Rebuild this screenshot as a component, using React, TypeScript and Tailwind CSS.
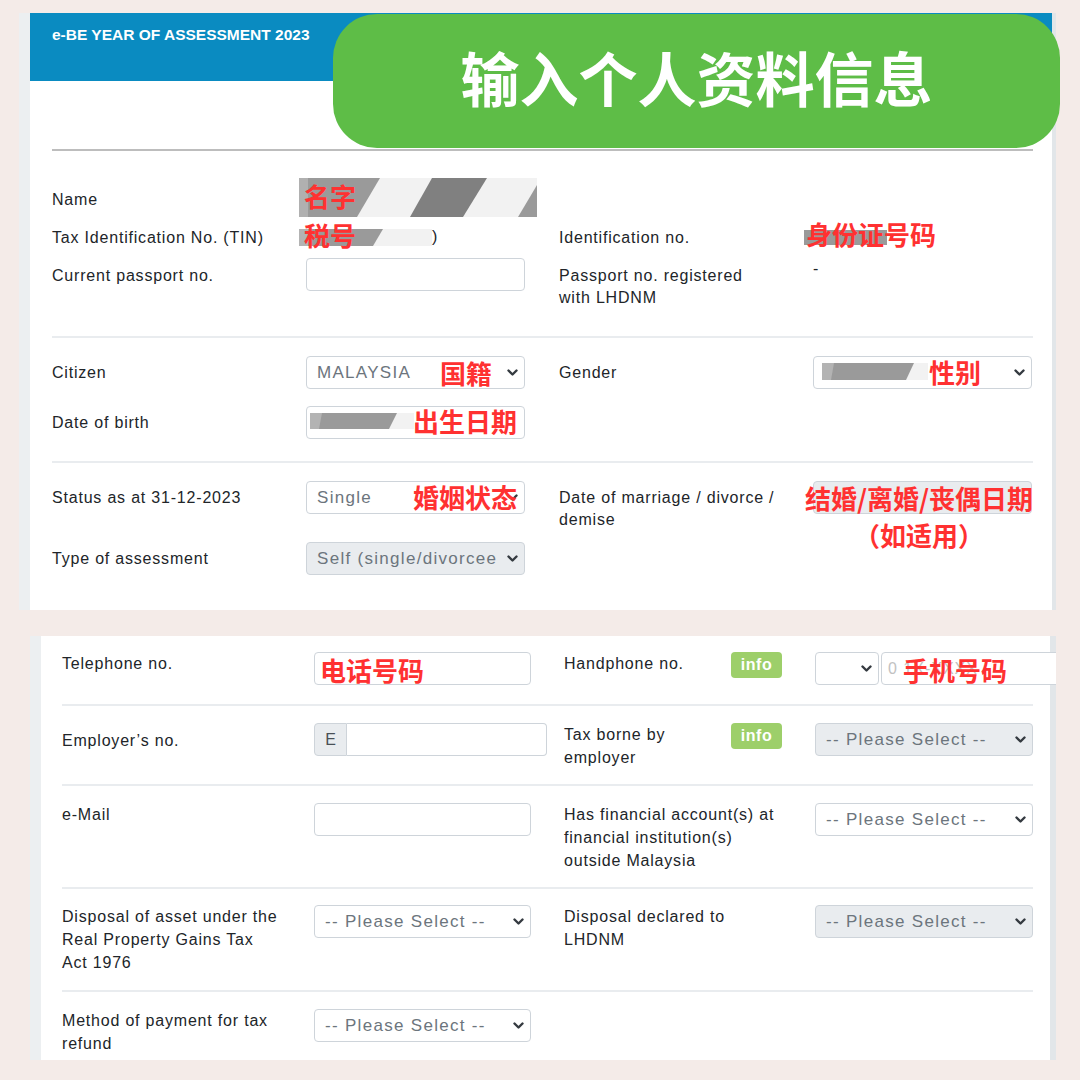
import React from "react";

const LABEL = "text-[16px] leading-[22px] tracking-[0.8px] text-[#212529]";
const LABEL2 = "text-[16px] leading-[23px] tracking-[0.8px] text-[#212529]";
const RED =
  "absolute whitespace-nowrap font-['Noto_Sans_CJK_SC',sans-serif] text-[26px] font-bold leading-[26px] text-[#ff3131]";
const COLS1 = "grid grid-cols-[254px_219px_34px_254px_219px]";
const COLS2 = "grid grid-cols-[252px_217px_33px_251px_218px]";

function Chevron() {
  return (
    <svg width="11" height="7" viewBox="0 0 11 7" className="shrink-0">
      <path
        d="M1.5 1.5 5.5 5.5 9.5 1.5"
        fill="none"
        stroke="#343a40"
        strokeWidth="2.4"
        strokeLinecap="round"
        strokeLinejoin="round"
      />
    </svg>
  );
}

function Select({
  text,
  disabled = false,
  className = "",
  children,
}: {
  text: string;
  disabled?: boolean;
  className?: string;
  children?: React.ReactNode;
}) {
  return (
    <div
      className={`relative flex h-[33px] items-center rounded-[4px] border border-[#ced4da] pl-[10px] pr-[6px] ${
        disabled ? "bg-[#e9ecef]" : "bg-white"
      } ${className}`}
    >
      <span className="min-w-0 flex-1 overflow-hidden whitespace-nowrap text-[17px] tracking-[1.3px] text-[#6c757d]">
        {text}
      </span>
      <Chevron />
      {children}
    </div>
  );
}

function Input({
  className = "",
  disabled = false,
  children,
}: {
  className?: string;
  disabled?: boolean;
  children?: React.ReactNode;
}) {
  return (
    <div
      className={`relative h-[33px] rounded-[4px] border border-[#ced4da] ${
        disabled ? "bg-[#e9ecef]" : "bg-white"
      } ${className}`}
    >
      {children}
    </div>
  );
}

function Badge() {
  return (
    <span className="flex h-[26px] w-[51px] shrink-0 items-center justify-center rounded-[4px] bg-[#9dcf6a] text-[16px] font-bold tracking-[0.5px] text-white">
      info
    </span>
  );
}

function Divider() {
  return <div className="h-[2px] bg-[#e9ecef]" />;
}

// grey diagonal redaction blocks over personal data
function NameBlur() {
  return (
    <svg width="238" height="39" viewBox="0 0 238 39" className="-ml-[7px] block">
      <rect width="238" height="39" fill="#f2f2f2" />
      <polygon points="0,0 81,0 58,39 0,39" fill="#9a9a9a" />
      <rect width="9" height="39" fill="#b0b0b0" />
      <polygon points="133,0 188,0 164,39 111,39" fill="#808080" />
      <polygon points="219,39 238,39 238,7" fill="#9a9a9a" />
    </svg>
  );
}

function ShortBlur({ w, h, g1, g2 }: { w: number; h: number; g1: number; g2: number }) {
  return (
    <svg width={w} height={h} viewBox={`0 0 ${w} ${h}`} className="block">
      <rect width={w} height={h} fill="#f2f2f2" />
      <polygon points={`0,0 ${g1},0 ${g2},${h} 0,${h}`} fill="#9a9a9a" />
      <polygon points={`0,0 12,0 9,${h} 0,${h}`} fill="#b3b3b3" />
    </svg>
  );
}

export default function App() {
  return (
    <div className="relative h-[1080px] w-[1080px] overflow-hidden bg-[#f4ebe8] pt-[13px] font-['Liberation_Sans',Arial,sans-serif]">
      {/* first screenshot panel */}
      <div className="ml-[19px] flex h-[597px] w-[1037px]">
        <div className="w-[11px] bg-[#eceff1]" />
        <div className="flex w-[1022px] flex-col bg-white">
          <div className="h-[68px] bg-[#0a8bc1] pl-[22px] pt-[12px] text-[15.5px] font-bold leading-[20px] text-white">
            e-BE YEAR OF ASSESSMENT 2023
          </div>
          <div className="pl-[22px] pr-[19px]">
            <div className="mt-[68px] h-[2px] bg-[#bdbdbd]" />

            <div className="h-[185px] pt-[27px]">
              <div className={`${COLS1} h-[39px]`}>
                <div className={`${LABEL} flex items-center pt-[5px]`}>Name</div>
                <div className="relative col-span-2">
                  <NameBlur />
                  <span className={`${RED} left-[-2px] top-[5px]`}>名字</span>
                </div>
              </div>

              <div className={`${COLS1} h-[40px]`}>
                <div className={`${LABEL} flex items-center pt-[2px]`}>Tax Identification No. (TIN)</div>
                <div className="relative -ml-[7px] flex items-center">
                  <ShortBlur w={133} h={17} g1={84} g2={74} />
                  <span className={LABEL}>)</span>
                  <span className={`${RED} left-[5px] top-[5px]`}>税号</span>
                </div>
                <div />
                <div className={`${LABEL} flex items-center pt-[2px]`}>Identification no.</div>
                <div className="relative flex items-center">
                  <div className="-ml-[9px] h-[15px] w-[83px] bg-[#9a9a9a]" />
                  <span className={`${RED} left-[-7px] top-[4px]`}>身份证号码</span>
                </div>
              </div>

              <div className={`${COLS1} mt-[1px]`}>
                <div className={`${LABEL} pt-[7px]`}>Current passport no.</div>
                <Input />
                <div />
                <div className={`${LABEL} pt-[7px]`}>
                  Passport no. registered
                  <br />
                  with LHDNM
                </div>
                <div className={LABEL}>-</div>
              </div>
            </div>
            <Divider />

            <div className="h-[123px] pt-[18px]">
              <div className={`${COLS1} h-[33px]`}>
                <div className={`${LABEL} pt-[6px]`}>Citizen</div>
                <Select text="MALAYSIA">
                  <span className={`${RED} left-[133px] top-[3px]`}>国籍</span>
                </Select>
                <div />
                <div className={`${LABEL} pt-[6px]`}>Gender</div>
                <Select text="">
                  <div className="absolute left-[8px] top-[6px]">
                    <ShortBlur w={106} h={17} g1={92} g2={84} />
                  </div>
                  <span className={`${RED} left-[115px] top-[2px]`}>性别</span>
                </Select>
              </div>
              <div className={`${COLS1} mt-[17px] h-[33px]`}>
                <div className={`${LABEL} pt-[6px]`}>Date of birth</div>
                <Input>
                  <div className="absolute left-[3px] top-[6px]">
                    <ShortBlur w={104} h={16} g1={87} g2={79} />
                  </div>
                  <span className={`${RED} left-[106px] top-[1px]`}>出生日期</span>
                </Input>
              </div>
            </div>
            <Divider />

            <div className="pt-[18px]">
              <div className={`${COLS1} h-[33px]`}>
                <div className={`${LABEL} pt-[6px]`}>Status as at 31-12-2023</div>
                <Select text="Single">
                  <span className={`${RED} left-[106px] top-[2px]`}>婚姻状态</span>
                </Select>
                <div />
                <div className={`${LABEL} pt-[6px]`}>
                  Date of marriage / divorce /
                  <br />
                  demise
                </div>
                <Input disabled>
                  <div className="absolute left-[-10px] top-[-3px] w-[230px] whitespace-nowrap text-center font-['Noto_Sans_CJK_SC',sans-serif] text-[26px] font-bold leading-[37px] text-[#ff3131]">
                    结婚/离婚/丧偶日期
                    <br />
                    （如适用）
                  </div>
                </Input>
              </div>
              <div className={`${COLS1} mt-[28px] h-[33px]`}>
                <div className={`${LABEL} pt-[6px]`}>Type of assessment</div>
                <Select text="Self (single/divorcee" disabled />
              </div>
            </div>
          </div>
        </div>
        <div className="w-[4px] bg-[#e2e6e9]" />
      </div>

      {/* second screenshot panel */}
      <div className="ml-[30px] mt-[26px] flex h-[424px] w-[1026px] overflow-hidden">
        <div className="w-[11px] shrink-0 bg-[#eceff1]" />
        <div className="w-[1009px] shrink-0 bg-white pl-[21px] pr-[17px]">
          <div className={`${COLS2} h-[68px] pt-[16px]`}>
            <div className={LABEL2}>Telephone no.</div>
            <Input>
              <span className={`${RED} left-[5px] top-[4px]`}>电话号码</span>
            </Input>
            <div />
            <div className="flex">
              <div className={`${LABEL2} w-[167px]`}>Handphone no.</div>
              <Badge />
            </div>
            <div className="flex gap-[2px]">
              <Select text="" className="w-[64px] shrink-0" />
              <Input className="w-[180px] shrink-0">
                <span className="absolute left-[6px] top-[6px] whitespace-nowrap text-[16px] leading-[20px] tracking-[1px] text-[#c2c2c2]">
                  0 1X-XXXX
                </span>
                <span className={`${RED} left-[21px] top-[4px]`}>手机号码</span>
              </Input>
            </div>
          </div>
          <Divider />

          <div className={`${COLS2} h-[78px] pt-[17px]`}>
            <div className={`${LABEL2} pt-[6px]`}>Employer’s no.</div>
            <div className="col-span-2 flex">
              <div className="flex h-[33px] w-[33px] items-center justify-center rounded-l-[4px] border border-[#ced4da] bg-[#e9ecef] text-[16px] text-[#495057]">
                E
              </div>
              <div className="h-[33px] w-[200px] rounded-r-[4px] border border-l-0 border-[#ced4da] bg-white" />
            </div>
            <div className="flex">
              <div className={`${LABEL2} w-[167px]`}>
                Tax borne by
                <br />
                employer
              </div>
              <Badge />
            </div>
            <Select text="-- Please Select --" disabled />
          </div>
          <Divider />

          <div className={`${COLS2} h-[101px] pt-[17px]`}>
            <div className={LABEL2}>e-Mail</div>
            <Input />
            <div />
            <div className={LABEL2}>
              Has financial account(s) at
              <br />
              financial institution(s)
              <br />
              outside Malaysia
            </div>
            <Select text="-- Please Select --" />
          </div>
          <Divider />

          <div className={`${COLS2} h-[101px] pt-[16px]`}>
            <div className={LABEL2}>
              Disposal of asset under the
              <br />
              Real Property Gains Tax
              <br />
              Act 1976
            </div>
            <Select text="-- Please Select --" />
            <div />
            <div className={LABEL2}>
              Disposal declared to
              <br />
              LHDNM
            </div>
            <Select text="-- Please Select --" disabled />
          </div>
          <Divider />

          <div className={`${COLS2} pt-[17px]`}>
            <div className={LABEL2}>
              Method of payment for tax
              <br />
              refund
            </div>
            <Select text="-- Please Select --" />
          </div>
        </div>
        <div className="w-[6px] shrink-0 bg-[#e2e6e9]" />
      </div>

      {/* green title banner over the header */}
      <div className="absolute left-[333px] top-[14px] flex h-[134px] w-[727px] items-center justify-center rounded-[44px] bg-[#5ebd47] pb-[8px]">
        <span className="font-['Noto_Sans_CJK_SC',sans-serif] text-[59px] font-bold leading-[70px] text-white">
          输入个人资料信息
        </span>
      </div>
    </div>
  );
}
